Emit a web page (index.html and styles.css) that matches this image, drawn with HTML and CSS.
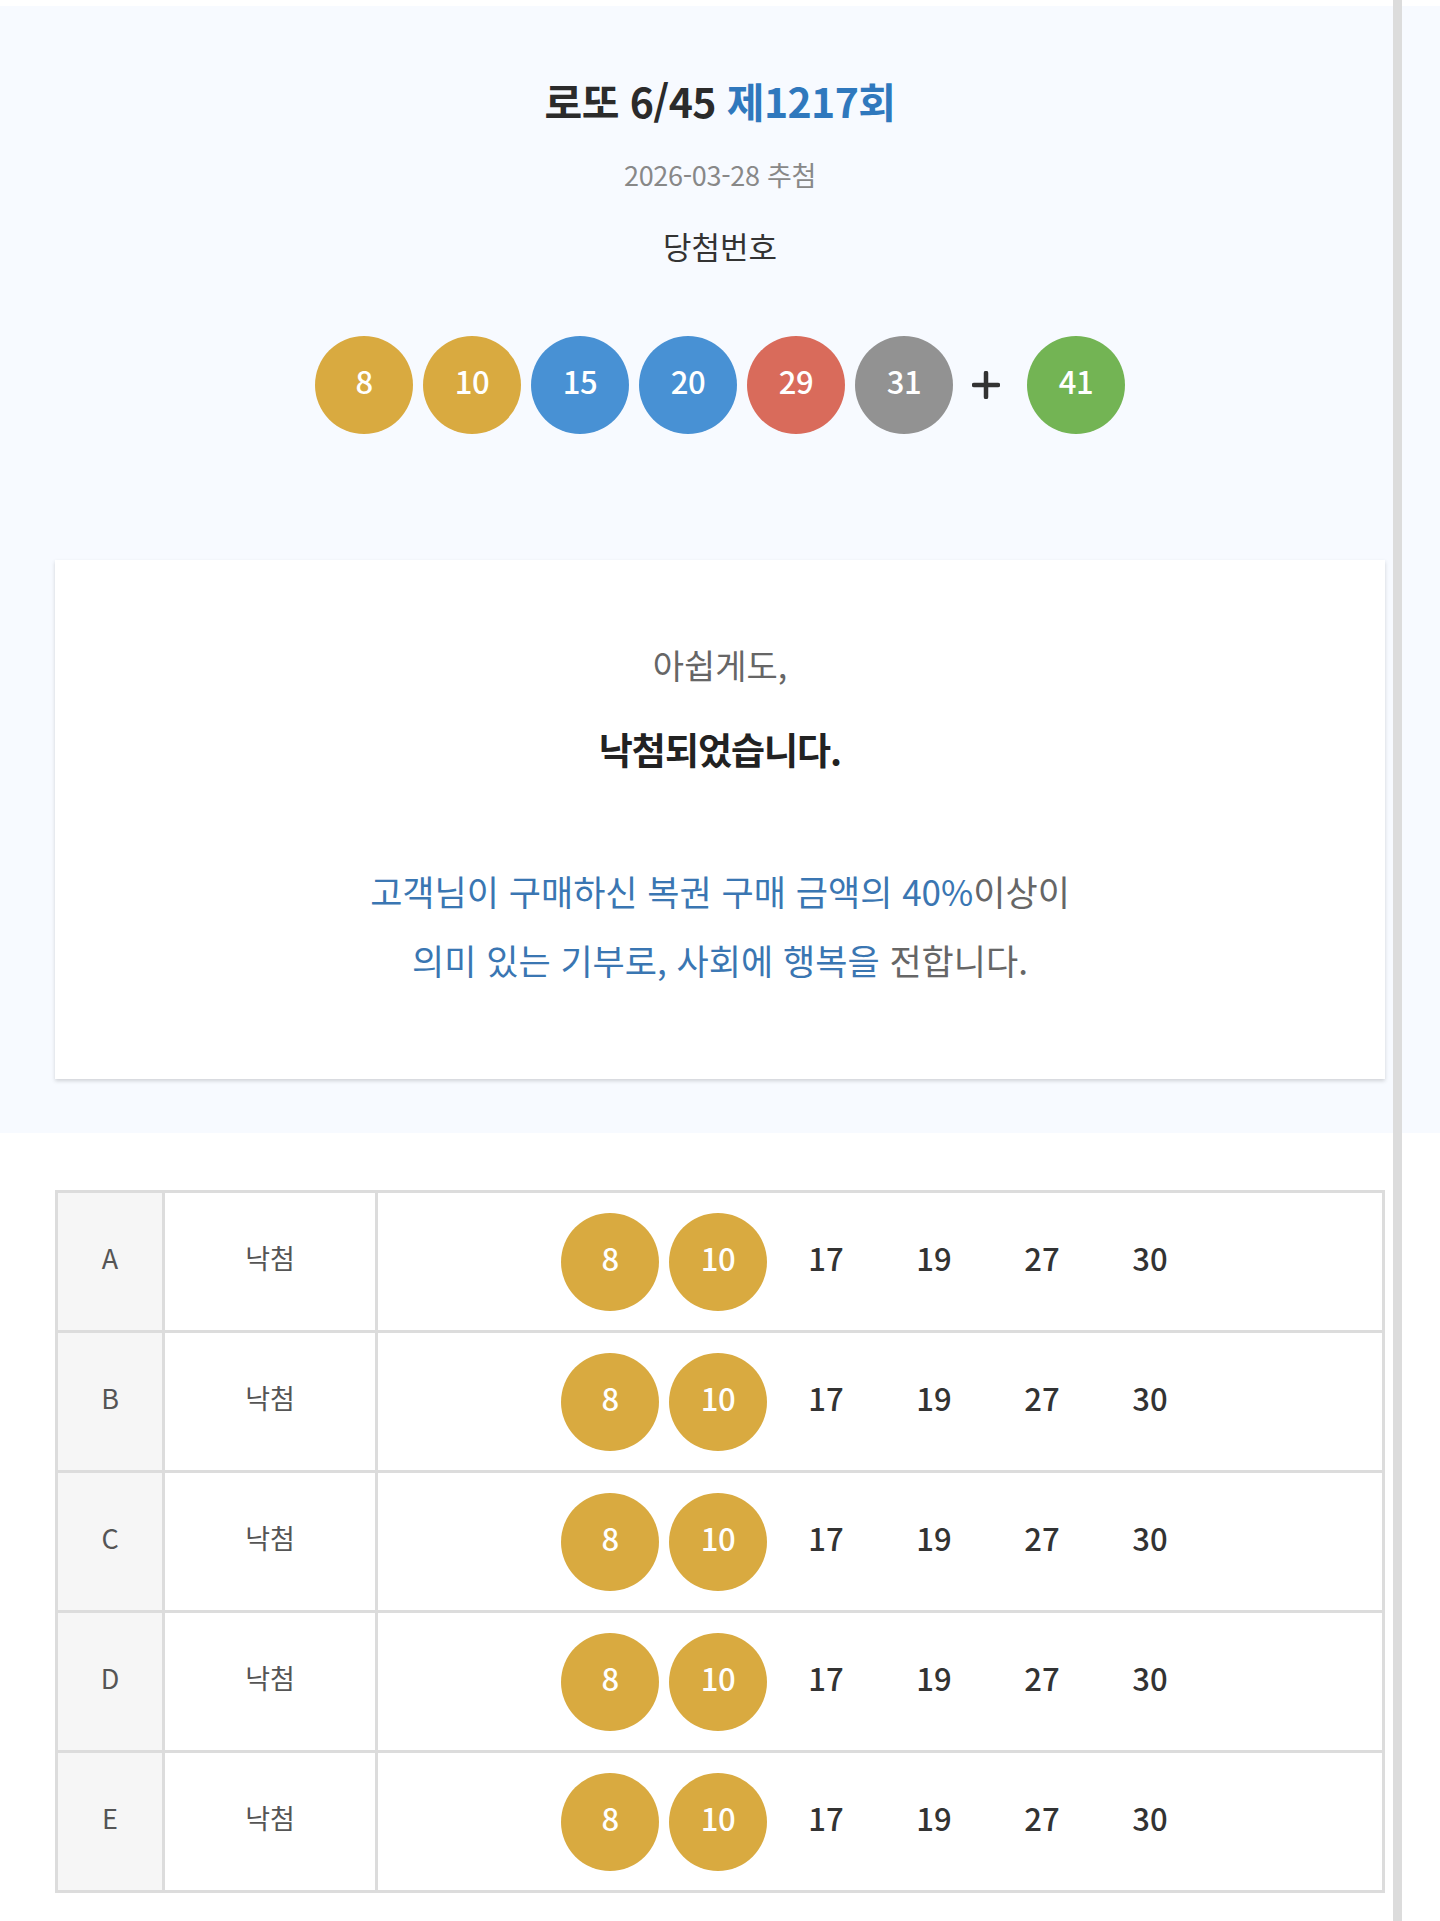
FILE: index.html
```html
<!DOCTYPE html>
<html lang="ko">
<head>
<meta charset="utf-8">
<title>로또 6/45 제1217회</title>
<link rel="stylesheet" href="styles.css">
</head>
<body>
<div class="page">
  <section class="draw">
    <h1 class="title">로또 6/45 <span class="title-round">제1217회</span></h1>
    <p class="date">2026-03-28 추첨</p>
    <p class="label">당첨번호</p>
    <div class="balls">
      <span class="ball yellow">8</span>
      <span class="ball yellow">10</span>
      <span class="ball blue">15</span>
      <span class="ball blue">20</span>
      <span class="ball red">29</span>
      <span class="ball gray">31</span>
      <span class="plus"><svg width="28" height="28" viewBox="0 0 28 28"><path d="M14 2v24M2 14h24" stroke="#333" stroke-width="4.5" stroke-linecap="round"/></svg></span>
      <span class="ball green">41</span>
    </div>
    <div class="card">
      <p class="sorry">아쉽게도,</p>
      <p class="result">낙첨되었습니다.</p>
      <p class="msg"><span class="msg-blue">고객님이 구매하신 복권 구매 금액의 40%</span>이상이<br><span class="msg-blue">의미 있는 기부로, 사회에 행복을</span> 전합니다.</p>
    </div>
  </section>
  <section class="tickets">
    <table class="ticket-table">
      <tr><td class="col-slot"><div class="cell">A</div></td><td class="col-res"><div class="cell">낙첨</div></td><td class="col-nums"><div class="cell nums"><span class="ball yellow">8</span><span class="ball yellow">10</span><span class="num">17</span><span class="num">19</span><span class="num">27</span><span class="num">30</span></div></td></tr>
      <tr><td class="col-slot"><div class="cell">B</div></td><td class="col-res"><div class="cell">낙첨</div></td><td class="col-nums"><div class="cell nums"><span class="ball yellow">8</span><span class="ball yellow">10</span><span class="num">17</span><span class="num">19</span><span class="num">27</span><span class="num">30</span></div></td></tr>
      <tr><td class="col-slot"><div class="cell">C</div></td><td class="col-res"><div class="cell">낙첨</div></td><td class="col-nums"><div class="cell nums"><span class="ball yellow">8</span><span class="ball yellow">10</span><span class="num">17</span><span class="num">19</span><span class="num">27</span><span class="num">30</span></div></td></tr>
      <tr><td class="col-slot"><div class="cell">D</div></td><td class="col-res"><div class="cell">낙첨</div></td><td class="col-nums"><div class="cell nums"><span class="ball yellow">8</span><span class="ball yellow">10</span><span class="num">17</span><span class="num">19</span><span class="num">27</span><span class="num">30</span></div></td></tr>
      <tr><td class="col-slot"><div class="cell">E</div></td><td class="col-res"><div class="cell">낙첨</div></td><td class="col-nums"><div class="cell nums"><span class="ball yellow">8</span><span class="ball yellow">10</span><span class="num">17</span><span class="num">19</span><span class="num">27</span><span class="num">30</span></div></td></tr>
    </table>
  </section>
  <div class="scroll-track"></div>
</div>
</body>
</html>
```
FILE: styles.css
```css
* { box-sizing: border-box; }
html, body { margin: 0; padding: 0; background: #fff; }
body {
  font-family: "Noto Sans CJK KR", "Noto Sans", sans-serif;
  color: #333;
}
p, h1 { margin: 0; }
.page {
  position: relative;
  width: 1440px;
  min-height: 1921px;
  padding-top: 6px;
}
.draw {
  background: #f7faff;
  padding: 70px 55px 54px;
  text-align: center;
}
.title {
  font-size: 41px;
  line-height: 48px;
  font-weight: 700;
  color: #2b2b2b;
  letter-spacing: -0.6px;
}
.title-round { color: #2f78bd; }
.date {
  margin-top: 35px;
  font-size: 27px;
  line-height: 32px;
  color: #888;
  font-weight: 400;
  letter-spacing: -0.3px;
}
.label {
  margin-top: 37px;
  font-size: 31px;
  line-height: 36px;
  color: #333;
}
.balls {
  margin-top: 72px;
  display: flex;
  justify-content: center;
  align-items: center;
}
.ball {
  width: 98px;
  height: 98px;
  border-radius: 50%;
  margin: 0 5px;
  padding-bottom: 9px;
  display: flex;
  align-items: center;
  justify-content: center;
  color: #fff;
  font-size: 31px;
  font-weight: 500;
  letter-spacing: -0.5px;
}
.yellow { background: #d9aa40; }
.blue { background: #4891d4; }
.red { background: #d96b5b; }
.gray { background: #929292; }
.green { background: #73b454; }
.plus {
  width: 28px;
  height: 28px;
  margin: 0 22px 0 14px;
  display: flex;
}
.card {
  margin-top: 126px;
  background: #fff;
  box-shadow: 0 2px 4px rgba(0, 0, 0, 0.16);
  padding: 83px 20px 84px;
  min-height: 519px;
}
.sorry {
  font-size: 34px;
  line-height: 44px;
  color: #666;
}
.result {
  margin-top: 40px;
  font-size: 37px;
  line-height: 44px;
  font-weight: 700;
  color: #222;
  letter-spacing: -1px;
}
.msg {
  margin-top: 85px;
  font-size: 35px;
  line-height: 69px;
  color: #666;
}
.msg-blue { color: #3a76b2; }
.tickets {
  padding: 57px 55px 28px;
}
.ticket-table {
  width: 1330px;
  border-collapse: collapse;
  border: 3px solid #dcdcdc;
}
.ticket-table td {
  border: 3px solid #dcdcdc;
  padding: 0;
  vertical-align: middle;
}
.cell {
  height: 137px;
  padding-bottom: 9px;
  display: flex;
  align-items: center;
  justify-content: center;
  font-size: 27px;
  color: #555;
}
.nums .ball { height: 98px; }
.col-slot { width: 107px; background: #f6f6f6; }
.col-res { width: 213px; }
.cell.nums { padding-bottom: 0; }
.num {
  width: 98px;
  margin: 0 5px;
  padding-bottom: 9px;
  text-align: center;
  font-size: 31px;
  font-weight: 500;
  color: #333;
}
.scroll-track {
  position: absolute;
  top: 0;
  bottom: 0;
  left: 1393px;
  width: 9px;
  background: #dcdcdc;
}
```
